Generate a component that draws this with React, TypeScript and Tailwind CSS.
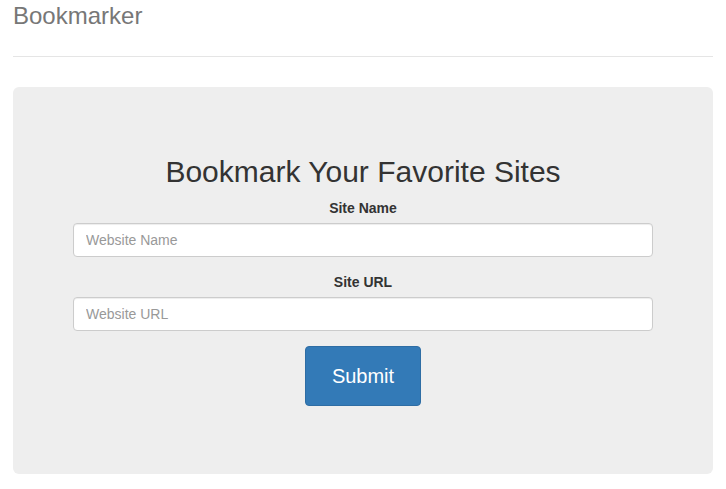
import React from 'react';

export default function App() {
  return (
    <div className="min-h-screen bg-white px-[13px] font-['Liberation_Sans',Arial,sans-serif] text-[14px] text-[#333]">
      <div className="border-b border-[#e5e5e5] pt-[3px] pb-[27px]">
        <h3 className="text-[24px] leading-[26px] text-[#777]">Bookmarker</h3>
      </div>

      <div className="mt-[30px] rounded-[6px] bg-[#eee] px-[60px] pt-[48px] pb-[68px] text-center">
        <h2 className="mt-[20px] mb-[10px] text-[30px] leading-[33px] text-[#333]">Bookmark Your Favorite Sites</h2>
        <form onSubmit={(e) => e.preventDefault()}>
          <div className="mb-[15px]">
            <label className="mb-[5px] block text-[14px] font-bold leading-[20px]">Site Name</label>
            <input
              type="text"
              placeholder="Website Name"
              className="block h-[34px] w-full rounded-[4px] border border-[#ccc] bg-white px-[12px] py-[6px] text-[14px] text-[#555] shadow-[inset_0_1px_1px_rgba(0,0,0,0.075)] outline-none placeholder:text-[#999]"
            />
          </div>
          <div className="mb-[15px]">
            <label className="mb-[5px] block text-[14px] font-bold leading-[20px]">Site URL</label>
            <input
              type="text"
              placeholder="Website URL"
              className="block h-[34px] w-full rounded-[4px] border border-[#ccc] bg-white px-[12px] py-[6px] text-[14px] text-[#555] shadow-[inset_0_1px_1px_rgba(0,0,0,0.075)] outline-none placeholder:text-[#999]"
            />
          </div>
          <button
            type="submit"
            className="h-[60px] w-[116px] rounded-[4px] border border-[#2e6da4] bg-[#337ab7] text-[20px] text-white"
          >
            Submit
          </button>
        </form>
      </div>
    </div>
  );
}
